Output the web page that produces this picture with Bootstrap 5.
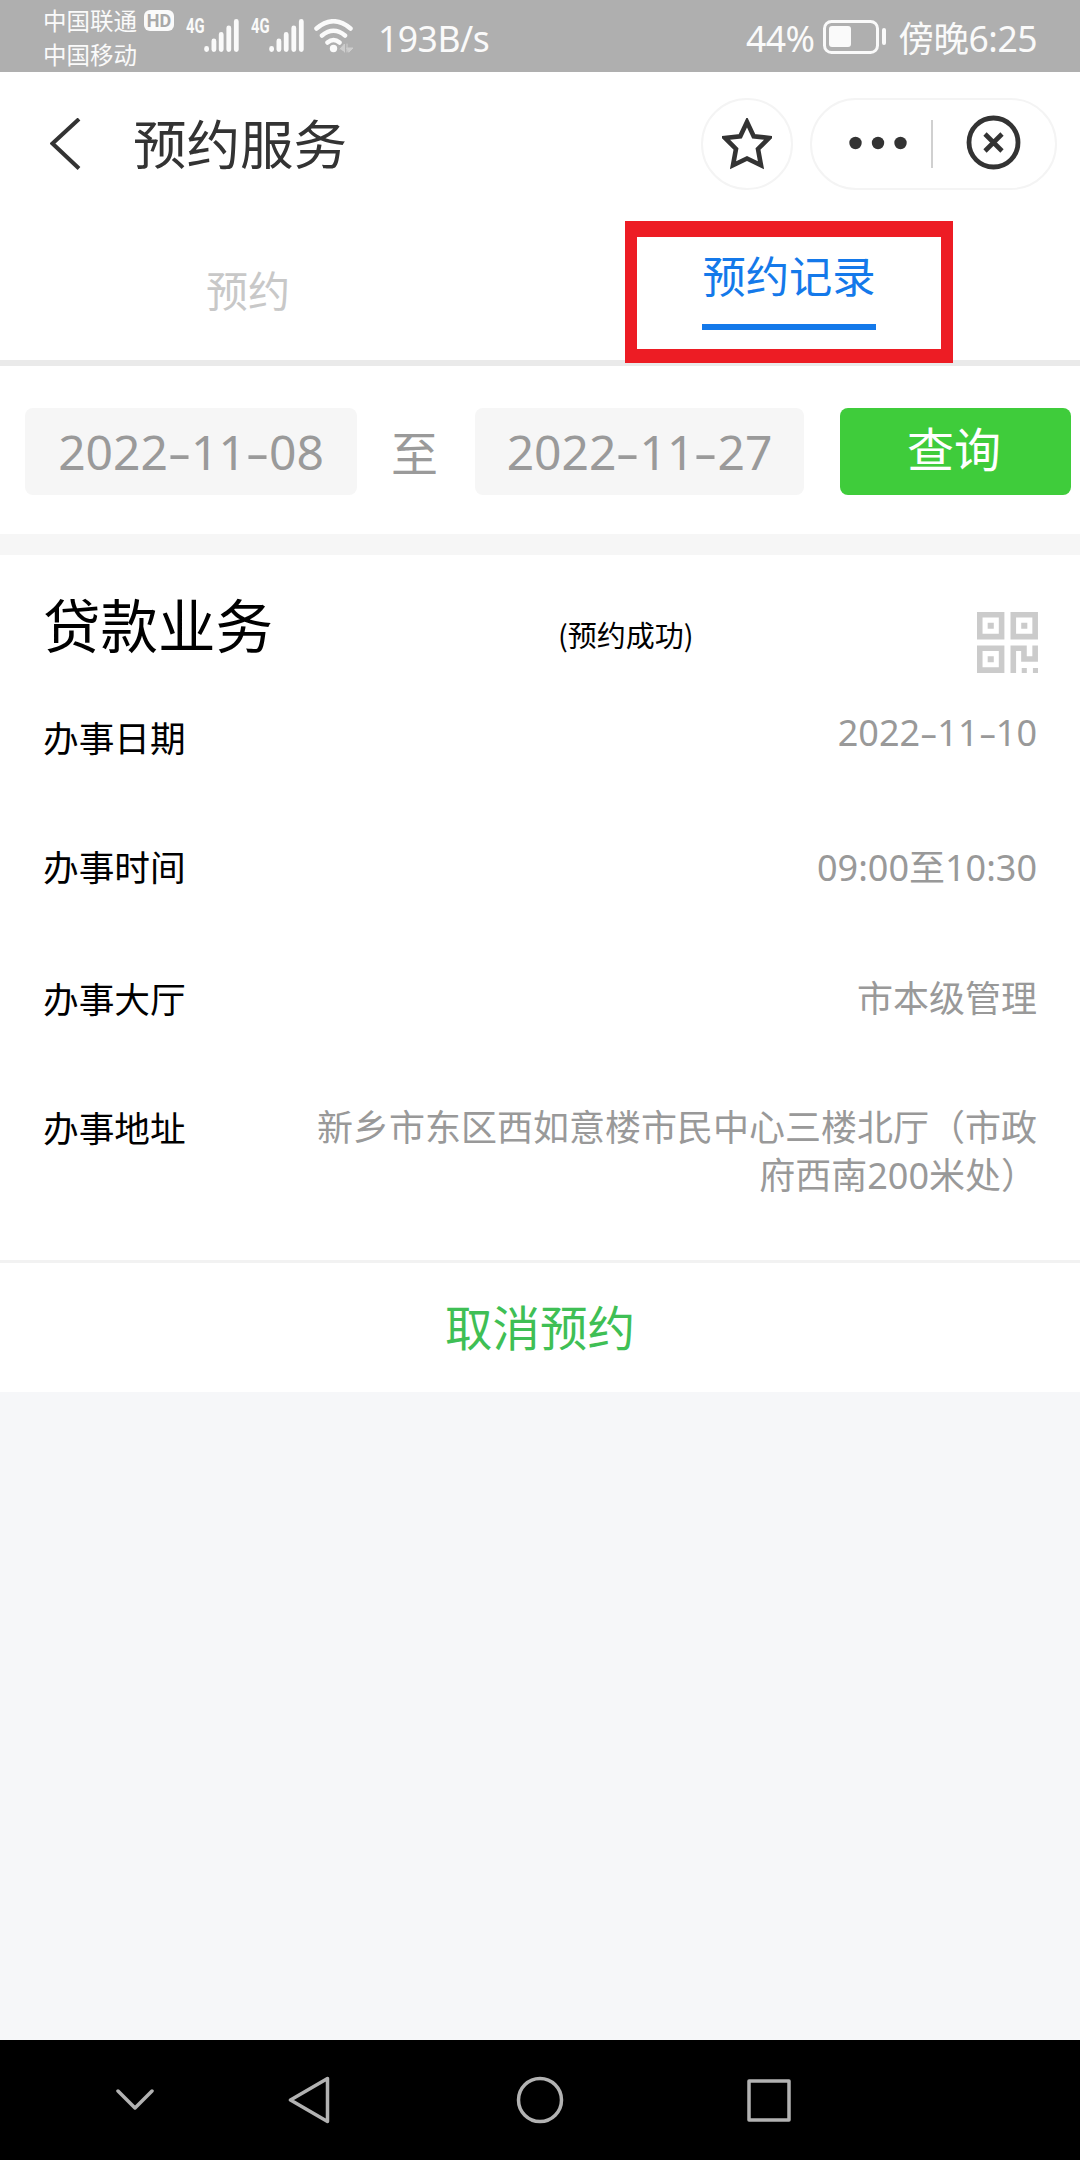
<!DOCTYPE html>
<html lang="zh-CN">
<head>
<meta charset="utf-8">
<meta name="viewport" content="width=device-width, initial-scale=1">
<title>预约服务</title>
<link href="https://cdn.jsdelivr.net/npm/bootstrap@5.3.0/dist/css/bootstrap.min.css" rel="stylesheet">
<style>
body{width:1080px;height:2160px;background:#f6f7f9;color:#000;font-family:"Noto Sans","Noto Sans CJK SC",sans-serif;overflow:hidden;line-height:1}
svg{display:block;flex:none}
.zh{font-family:"Noto Sans CJK SC",sans-serif}
.statusbar{height:72px;background:#afafaf;color:#fafafa;padding:0 43px 0 43px}
.carriers{font-size:23.5px;line-height:34px;width:101px;padding-top:3px;white-space:nowrap}
.hdtag{width:30px;height:21px;margin-top:10px;border-radius:6px;background:#fafafa;color:#a8a8a8;font:700 18px/21px "Roboto",sans-serif;text-align:center}
.net{font:700 20px/17px "Roboto",sans-serif;width:30px;margin-top:18px}
.net span{display:inline-block;transform:scaleX(.74);transform-origin:left}
.sig{margin:19px 0 0 -8px}
.rate{font-size:35.5px;line-height:54px;padding-top:11px;white-space:nowrap;letter-spacing:-.5px}
.titlebar{height:143px;padding:0 23px 0 50px}
.titlebar h1{font-size:53.5px;line-height:60px;color:#333;margin:-3px 0 0 52px;font-weight:400}
.roundbtn{width:92px;height:92px;border:2px solid #f4f4f4;border-radius:46px;background:#fff;padding:0}
.capsule{width:247px;height:92px;border:2px solid #f4f4f4;border-radius:46px;margin-left:17px}
.tabs{height:151px;border-bottom:6px solid #eaeaea;position:relative}
.tabitem{border:0;background:none;padding:0;font-size:42px;line-height:48px;color:#c8c8c8;margin-left:206px;margin-top:50px}
.tabitem.now{color:#1479ea;font-size:43.3px;width:174px;height:80px;border-bottom:6px solid #1479ea;margin:35px 204px 0 0}
.marker{position:absolute;left:625px;top:6px;width:328px;height:142px;border:solid #ed1c24;border-width:16px 12px 14px}
.filter{height:168px;padding:42px 9px 0 25px}
.datebox{height:87px;border-radius:8px;background:#f6f6f6;color:#9a9a9a;font-size:48px;line-height:88px;width:332px;text-align:center;white-space:nowrap}
.hy{display:inline-block;width:.48em;text-align:center;transform:scaleX(1.55)}
.sep{font-size:47px;line-height:86px;color:#9a9a9a;width:118px;padding-right:3px;text-align:center}
.query{width:231px;height:87px;border:0;border-radius:8px;background:#3fcc3b;color:#fff;font-size:47px;line-height:77px;padding:0 3px 10px 0;margin-left:36px}
.query:hover{background:#3fcc3b}
.band{height:21px;background:#f6f6f6}
.record{height:705px;padding:0 43px}
.rhead{height:150px}
.rhead h2{font-size:57.5px;line-height:64px;width:515px;margin:36px 0 0;font-weight:400}
.state{font-size:29px;line-height:36px;margin-top:61px}
.entry{font-size:36px;line-height:48px}
.entry .lab{font-size:35.7px}
.entry .val{color:#999;text-align:right;width:730px;padding-top:1px}
.cancel{height:132px;border:0;border-top:3px solid #f2f2f2;border-radius:0;background:#fff;color:#3fbf55;font-size:47.5px;line-height:60px;padding:0 0 4px}
.softkeys{height:120px;background:#000}
</style>
</head>
<body class="d-flex flex-column m-0">
<header class="statusbar d-flex align-items-start">
  <div class="carriers zh">中国联通<br>中国移动</div>
  <div class="hdtag">HD</div>
  <div class="net ms-2 ps-1"><span>4G</span></div>
  <svg class="sig" width="35" height="33" viewBox="0 0 35 33" stroke="#fafafa" stroke-width="4.8" stroke-linecap="round"><path d="M2.6 29.5v1M9.9 22v8.5M17.2 15.5v15M24.8 9v21.5M32.3 2.5v28"/></svg>
  <div class="net ms-2 ps-1"><span>4G</span></div>
  <svg class="sig" width="35" height="33" viewBox="0 0 35 33" stroke="#fafafa" stroke-width="4.8" stroke-linecap="round"><path d="M2.6 29.5v1M9.9 22v8.5M17.2 15.5v15M24.8 9v21.5M32.3 2.5v28"/></svg>
  <svg width="42" height="34" viewBox="0 0 42 34" style="margin:19px 0 0 10px" fill="none" stroke="#fafafa" stroke-width="4.5" stroke-linecap="round"><path d="M2.5 9.500Q19.500-5 36.500 9.500M8 16.500Q19.500 7 31 16.500M13.500 23.500Q19.500 18.500 25.500 23.500"/><circle cx="19.500" cy="29.500" r="3.700" fill="#fafafa" stroke="none"/><path d="M26 30l4.500-5v8M33 33v-8M33 29h6l-4 4z" fill="#cdcdcd" stroke="#cdcdcd" stroke-width="1"/></svg>
  <div class="rate" style="margin-left:22px">193B/s</div>
  <div class="rate ms-auto">44%</div>
  <svg width="64" height="34" viewBox="0 0 64 34" style="margin:20px 0 0 8px" fill="none"><rect x="1.500" y="1.500" width="53" height="31" rx="7" stroke="#fafafa" stroke-width="3"/><rect x="6" y="6" width="22" height="21" rx="3" fill="#fafafa"/><path d="M61 10v13" stroke="#fafafa" stroke-width="4" stroke-linecap="round"/></svg>
  <div class="rate" style="margin-left:12px">傍晚6:25</div>
</header>

<nav class="titlebar bg-white d-flex align-items-center">
  <svg width="31" height="52" viewBox="0 0 31 52" fill="none" stroke="#333" stroke-width="4"><path d="M29 1L2.500 25.500l26.500 25"/></svg>
  <h1 class="zh">预约服务</h1>
  <button class="roundbtn ms-auto d-flex align-items-center justify-content-center"><svg width="50" height="52" viewBox="0 0 50 52" fill="none" stroke="#333" stroke-width="4.600"><path d="M25 4l6.700 14.300 15.300 1.600L36 31l3 16.300L25 40.500l-14 6.800L14 31 3 19.900l15.300-1.600z"/></svg></button>
  <div class="capsule bg-white d-flex align-items-center">
    <svg width="243" height="88" viewBox="0 0 243 88"><g fill="#333"><circle cx="43.500" cy="43" r="6.200"/><circle cx="66" cy="43" r="6.200"/><circle cx="88.500" cy="43" r="6.200"/></g><path d="M120 20v48" stroke="#d0d0d0" stroke-width="2"/><circle cx="181.500" cy="42.500" r="24.500" fill="none" stroke="#333" stroke-width="4.800"/><path d="M173 34l17 17M190 34l-17 17" stroke="#333" stroke-width="4.600"/></svg>
  </div>
</nav>

<div class="tabs bg-white d-flex justify-content-between align-items-start zh">
  <button class="tabitem">预约</button>
  <button class="tabitem now d-flex justify-content-center">预约记录</button>
  <div class="marker"></div>
</div>

<section class="filter bg-white d-flex">
  <div class="datebox">2022<span class="hy">-</span>11<span class="hy">-</span>08</div>
  <div class="sep zh">至</div>
  <div class="datebox" style="width:329px">2022<span class="hy">-</span>11<span class="hy">-</span>27</div>
  <button class="btn query zh">查询</button>
</section>
<div class="band"></div>

<main class="record bg-white">
  <div class="rhead d-flex align-items-start">
    <h2 class="zh">贷款业务</h2>
    <div class="state zh">(预约成功)</div>
    <svg class="ms-auto" width="61" height="61" viewBox="0 0 60 60" style="margin:57px -1px 0 0" fill="none" stroke="#cbcbcb" stroke-width="5.500"><path d="M2.700 2.700h21.500v21.500h-21.500zM35.700 2.700h21.500v21.500h-21.500zM2.700 35.700h21.500v21.500h-21.500zM35.700 60V35.700h10.500v10.500h11V33"/><g fill="#cbcbcb" stroke="none"><path d="M10.500 10.500h6v6h-6zM43.500 10.500h6v6h-6zM10.500 43.500h6v6h-6zM44 55h5v5h-5zM55 55h5v5h-5z"/></g></svg>
  </div>
  <div class="entry d-flex justify-content-between" style="height:137px"><div class="lab zh" style="padding-top:8px">办事日期</div><div class="val" style="padding-top:4px">2022<span class="hy">-</span>11<span class="hy">-</span>10</div></div>
  <div class="entry d-flex justify-content-between" style="height:132px"><div class="lab zh">办事时间</div><div class="val" style="padding-top:2px">09:00至10:30</div></div>
  <div class="entry d-flex justify-content-between" style="height:129px"><div class="lab zh">办事大厅</div><div class="val">市本级管理</div></div>
  <div class="entry d-flex justify-content-between"><div class="lab zh">办事地址</div><div class="val">新乡市东区西如意楼市民中心三楼北厅（市政府西南200米处）</div></div>
</main>
<button class="cancel zh w-100">取消预约</button>

<footer class="softkeys mt-auto">
  <svg width="1080" height="120" viewBox="0 0 1080 120" fill="none" stroke="#b2b2b2" stroke-width="3.500" stroke-linecap="round" stroke-linejoin="round"><path d="M118 51l17 17 17-17M327.500 38.500v43L290.500 60z"/><circle cx="540" cy="60" r="21.500"/><rect x="749" y="41" width="40" height="39"/></svg>
</footer>
<script src="https://cdn.jsdelivr.net/npm/bootstrap@5.3.0/dist/js/bootstrap.bundle.min.js"></script>
</body>
</html>
